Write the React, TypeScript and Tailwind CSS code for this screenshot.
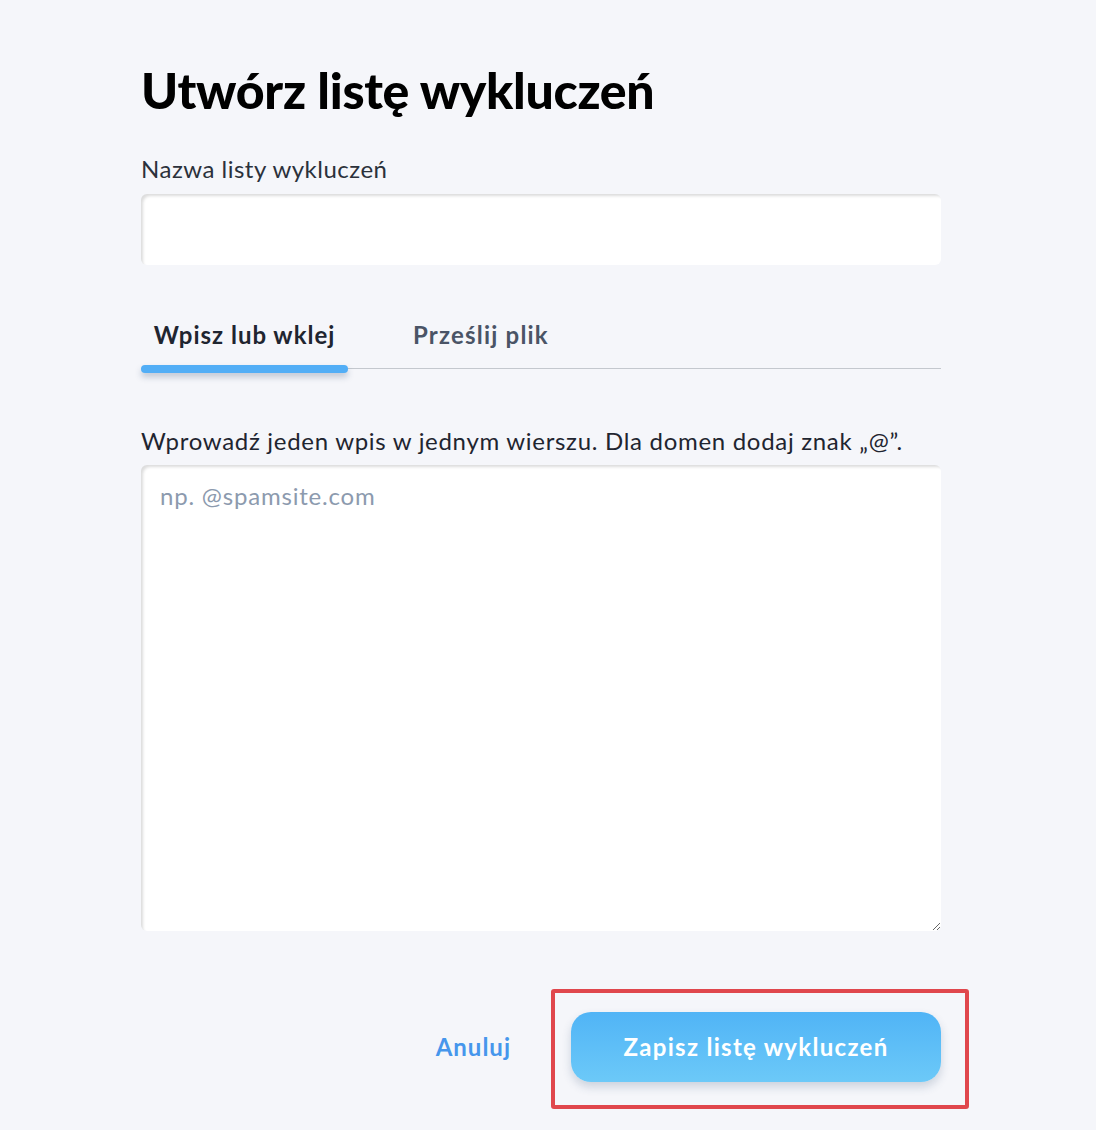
import React from "react";

export default function App() {
  return (
    <div className="min-h-screen bg-[#f5f6fa] font-['Lato',sans-serif] text-[#1f2530]">
      <div className="ml-[141px] w-[800px] pt-[60px]">
        <h1 className="text-[50px] leading-[60px] font-black text-black tracking-[-0.3px]">
          Utwórz listę wykluczeń
        </h1>
        <label className="mt-[34px] block text-[24px] leading-[30px] tracking-[0.5px] text-[#2b313b]">
          Nazwa listy wykluczeń
        </label>
        <input
          type="text"
          className="mt-[10px] block h-[71px] w-full rounded-[6px] bg-white shadow-[inset_3px_3px_3px_-1px_rgba(0,0,0,0.14)] outline-none"
        />
        <div className="relative mt-[55px] flex h-[49px] items-start border-b border-[#c4c8ce]">
          <div className="relative flex h-full w-[207px] justify-center">
            <span className="text-[24px] leading-[30px] font-bold tracking-[1px] text-[#1f2530]">
              Wpisz lub wklej
            </span>
            <div className="absolute -bottom-[4.5px] left-0 h-[8px] w-full rounded-full bg-[#52aef6] shadow-[0_4px_6px_rgba(30,60,100,0.25)]" />
          </div>
          <span className="ml-[65px] text-[24px] leading-[30px] font-bold tracking-[1.2px] text-[#4a5466]">
            Prześlij plik
          </span>
        </div>
        <p className="mt-[57px] text-[24px] leading-[30px] tracking-[0.7px] text-[#1f2530]">
          Wprowadź jeden wpis w jednym wierszu. Dla domen dodaj znak „@”.
        </p>
        <textarea
          placeholder="np. @spamsite.com"
          className="mt-[9px] block h-[466px] w-full resize-y rounded-[6px] bg-white px-[19px] pt-[16px] text-[24px] leading-[30px] tracking-[0.8px] text-[#1f2530] placeholder:text-[#8c9aae] shadow-[inset_3px_3px_3px_-1px_rgba(0,0,0,0.14)] outline-none"
        />
        <div className="mt-[81px] flex items-center justify-end">
          <button className="text-[24px] font-bold tracking-[1px] text-[#4696ec]">Anuluj</button>
          <div className="relative ml-[60px]">
            <button className="h-[70px] w-[370px] rounded-[20px] bg-gradient-to-b from-[#50b4f6] to-[#6cc9f8] text-[24px] font-bold tracking-[1.3px] text-white shadow-[0_5px_10px_rgba(40,70,110,0.2)]">
              Zapisz listę wykluczeń
            </button>
            <div className="pointer-events-none absolute -left-[20px] -right-[28px] -top-[23px] -bottom-[27px] rounded-[3px] border-[4px] border-[#e0474d]" />
          </div>
        </div>
      </div>
    </div>
  );
}
